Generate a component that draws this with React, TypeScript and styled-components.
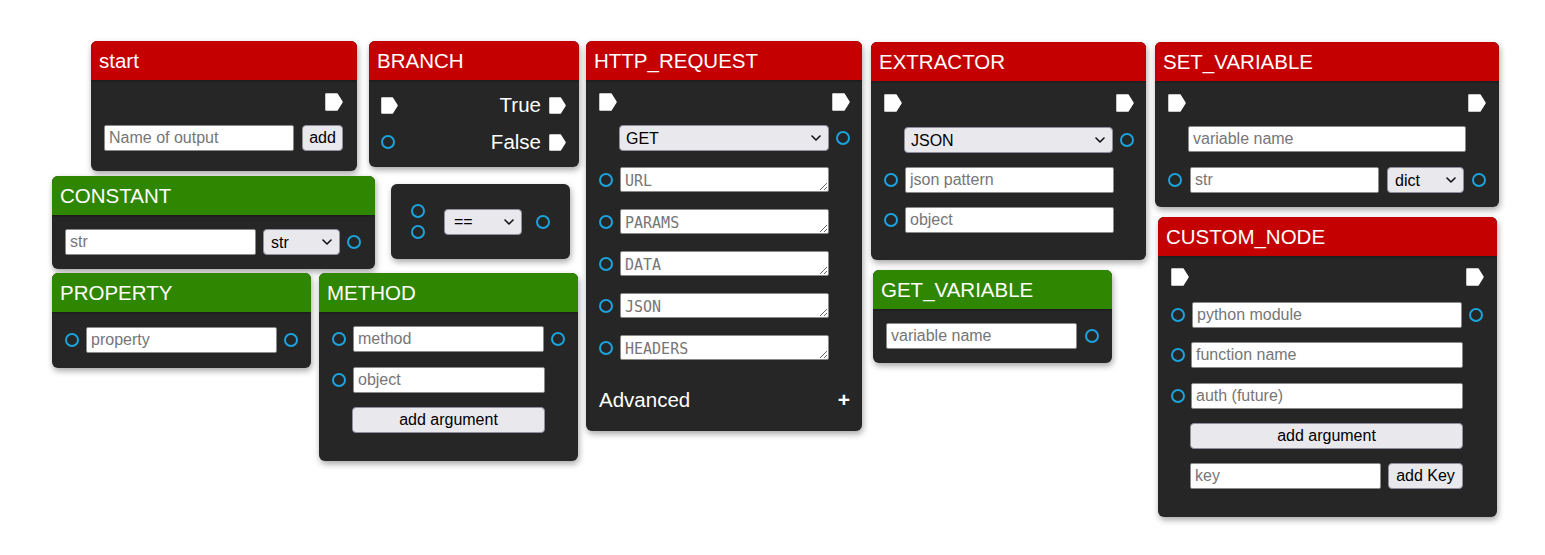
import React from "react";
import styled, { createGlobalStyle } from "styled-components";

const Global = createGlobalStyle`
  html, body { margin: 0; padding: 0; background: #ffffff; }
  body { font-family: "Liberation Sans", Arial, sans-serif; }
`;

const RED = "#c40000";
const GREEN = "#2f8600";

const Canvas = styled.div`
  position: relative;
  width: 1545px;
  height: 555px;
  overflow: hidden;
  background: #ffffff;
`;

const NodeBox = styled.div<{ $x: number; $y: number; $w: number }>`
  position: absolute;
  left: ${(p) => p.$x}px;
  top: ${(p) => p.$y}px;
  width: ${(p) => p.$w}px;
  background: #262626;
  border-radius: 6px;
  box-shadow: 1px 3px 6px rgba(0, 0, 0, 0.35);
  overflow: hidden;
  display: flex;
  flex-direction: column;
`;

const Header = styled.div<{ $tone: string }>`
  position: relative;
  z-index: 1;
  height: 39px;
  background: ${(p) => p.$tone};
  color: #ffffff;
  font-size: 20.5px;
  display: flex;
  align-items: center;
  padding-left: 8px;
  box-shadow: 0 1px 2px rgba(0, 0, 0, 0.35);
`;

const Body = styled.div<{ $p: string }>`
  display: flex;
  flex-direction: column;
  padding: ${(p) => p.$p};
`;

const Row = styled.div<{ $mt?: number; $gap?: number; $h?: number; $justify?: string }>`
  display: flex;
  align-items: center;
  margin-top: ${(p) => p.$mt ?? 0}px;
  gap: ${(p) => p.$gap ?? 7}px;
  height: ${(p) => p.$h ?? 26}px;
  justify-content: ${(p) => p.$justify ?? "flex-start"};
`;

const Group = styled.div`
  display: flex;
  align-items: center;
  gap: 8px;
`;

const CompareBody = styled.div`
  display: flex;
  align-items: center;
  height: 75px;
  padding-left: 20px;
  gap: 14px;
`;

const PortStack = styled.div`
  display: flex;
  flex-direction: column;
  gap: 7px;
  margin-right: 5px;
`;

const Spacer = styled.span<{ $w: number }>`
  flex: none;
  width: ${(p) => p.$w}px;
`;

const Port = styled.span`
  flex: none;
  display: block;
  box-sizing: border-box;
  width: 14px;
  height: 14px;
  border-radius: 50%;
  border: 2.5px solid #1ba3dc;
`;

const ExecSvg = styled.svg`
  flex: none;
  display: block;
`;

const Exec = ({ s = 18 }: { s?: number }) => (
  <ExecSvg width={s} height={s} viewBox="0 0 18 18">
    <path
      d="M1 1 H12 L17 9 L12 17 H1 Z"
      fill="#ffffff"
      stroke="#ffffff"
      strokeWidth="1.5"
      strokeLinejoin="round"
    />
  </ExecSvg>
);

const TextInput = styled.input<{ $w: number }>`
  flex: none;
  box-sizing: border-box;
  width: ${(p) => p.$w}px;
  height: 26px;
  margin: 0;
  border: 1px solid #8a8a8a;
  border-radius: 2px;
  background: #ffffff;
  padding: 0 4px;
  font: 16px "Liberation Sans", Arial, sans-serif;
  color: #000000;
  outline: none;
  &::placeholder {
    color: #767676;
  }
`;

const TextArea = styled.textarea<{ $w: number }>`
  flex: none;
  box-sizing: border-box;
  width: ${(p) => p.$w}px;
  height: 25px;
  margin: 0;
  border: 1px solid #8a8a8a;
  border-radius: 2px;
  background: #ffffff;
  padding: 5px 4px 0 4px;
  font: 15px/17px "DejaVu Sans Mono", "Liberation Mono", monospace;
  color: #000000;
  overflow: hidden;
  resize: both;
  outline: none;
  &::placeholder {
    color: #767676;
  }
`;

const SelectWrap = styled.div<{ $w: number }>`
  position: relative;
  flex: none;
  width: ${(p) => p.$w}px;
  height: 26px;
`;

const NativeSelect = styled.select<{ $pl?: number }>`
  appearance: none;
  -webkit-appearance: none;
  box-sizing: border-box;
  width: 100%;
  height: 100%;
  margin: 0;
  background: #e9e9ed;
  border: 1px solid #8f8f9d;
  border-radius: 4px;
  font: 16px "Liberation Sans", Arial, sans-serif;
  color: #000000;
  padding: 0 20px 0 ${(p) => p.$pl ?? 6}px;
  outline: none;
`;

const Chevron = styled.svg`
  position: absolute;
  right: 8px;
  top: 50%;
  margin-top: -3px;
  width: 10px;
  height: 6px;
  pointer-events: none;
`;

const Select = ({ w, value, options, pl }: { w: number; value: string; options: string[]; pl?: number }) => (
  <SelectWrap $w={w}>
    <NativeSelect $pl={pl} defaultValue={value}>
      {options.map((o) => (
        <option key={o} value={o}>
          {o}
        </option>
      ))}
    </NativeSelect>
    <Chevron viewBox="0 0 10 6">
      <path d="M1 1 L5 5 L9 1" fill="none" stroke="#111" strokeWidth="1.6" strokeLinecap="round" strokeLinejoin="round" />
    </Chevron>
  </SelectWrap>
);

const Btn = styled.button<{ $w: number }>`
  flex: none;
  box-sizing: border-box;
  width: ${(p) => p.$w}px;
  height: 26px;
  margin: 0;
  padding: 0;
  background: #e9e9ed;
  border: 1px solid #8f8f9d;
  border-radius: 4px;
  font: 16px "Liberation Sans", Arial, sans-serif;
  color: #000000;
`;

const Label = styled.span`
  color: #ffffff;
  font-size: 20.5px;
  line-height: 24px;
`;

const Plus = styled.span`
  color: #ffffff;
  font-size: 21px;
  font-weight: bold;
  line-height: 24px;
`;

const typeOptions = ["str", "int", "float", "bool", "dict", "list"];

export default function App() {
  return (
    <>
      <Global />
      <Canvas>
        {/* start */}
        <NodeBox $x={91} $y={41} $w={266}>
          <Header $tone={RED}>start</Header>
          <Body $p="13px 14px 20px 13px">
            <Row $h={18} $justify="flex-end">
              <Exec />
            </Row>
            <Row $mt={14} $gap={8}>
              <TextInput $w={190} placeholder="Name of output" />
              <Btn $w={41}>add</Btn>
            </Row>
          </Body>
        </NodeBox>

        {/* BRANCH */}
        <NodeBox $x={369} $y={41} $w={210}>
          <Header $tone={RED}>BRANCH</Header>
          <Body $p="13px 13px 13px 12px">
            <Row $h={24} $justify="space-between">
              <Exec s={17} />
              <Group>
                <Label>True</Label>
                <Exec s={17} />
              </Group>
            </Row>
            <Row $mt={13} $h={24} $justify="space-between">
              <Port />
              <Group>
                <Label>False</Label>
                <Exec s={17} />
              </Group>
            </Row>
          </Body>
        </NodeBox>

        {/* CONSTANT */}
        <NodeBox $x={52} $y={176} $w={323}>
          <Header $tone={GREEN}>CONSTANT</Header>
          <Body $p="14px 14px 14px 13px">
            <Row>
              <TextInput $w={191} placeholder="str" />
              <Select w={77} value="str" options={typeOptions} pl={7} />
              <Port />
            </Row>
          </Body>
        </NodeBox>

        {/* compare */}
        <NodeBox $x={391} $y={184} $w={179}>
          <CompareBody>
            <PortStack>
              <Port />
              <Port />
            </PortStack>
            <Select w={78} value="==" options={["==", "!=", "<", ">", "<=", ">="]} pl={9} />
            <Port />
          </CompareBody>
        </NodeBox>

        {/* PROPERTY */}
        <NodeBox $x={52} $y={273} $w={259}>
          <Header $tone={GREEN}>PROPERTY</Header>
          <Body $p="15px 13px 15px 13px">
            <Row>
              <Port />
              <TextInput $w={191} placeholder="property" />
              <Port />
            </Row>
          </Body>
        </NodeBox>

        {/* METHOD */}
        <NodeBox $x={319} $y={273} $w={259}>
          <Header $tone={GREEN}>METHOD</Header>
          <Body $p="14px 13px 28px 13px">
            <Row>
              <Port />
              <TextInput $w={191} placeholder="method" />
              <Port />
            </Row>
            <Row $mt={15}>
              <Port />
              <TextInput $w={192} placeholder="object" />
            </Row>
            <Row $mt={14}>
              <Spacer $w={13} />
              <Btn $w={193}>add argument</Btn>
            </Row>
          </Body>
        </NodeBox>

        {/* HTTP_REQUEST */}
        <NodeBox $x={586} $y={41} $w={276}>
          <Header $tone={RED}>HTTP_REQUEST</Header>
          <Body $p="13px 12px 19px 13px">
            <Row $h={18} $justify="space-between">
              <Exec />
              <Exec />
            </Row>
            <Row $mt={14}>
              <Spacer $w={13} />
              <Select w={210} value="GET" options={["GET", "POST", "PUT", "DELETE", "PATCH"]} />
              <Port />
            </Row>
            <Row $mt={16} $h={25}>
              <Port />
              <TextArea $w={209} rows={1} placeholder="URL" />
            </Row>
            <Row $mt={17} $h={25}>
              <Port />
              <TextArea $w={209} rows={1} placeholder="PARAMS" />
            </Row>
            <Row $mt={17} $h={25}>
              <Port />
              <TextArea $w={209} rows={1} placeholder="DATA" />
            </Row>
            <Row $mt={17} $h={25}>
              <Port />
              <TextArea $w={209} rows={1} placeholder="JSON" />
            </Row>
            <Row $mt={17} $h={25}>
              <Port />
              <TextArea $w={209} rows={1} placeholder="HEADERS" />
            </Row>
            <Row $mt={28} $h={24} $justify="space-between">
              <Label>Advanced</Label>
              <Plus>+</Plus>
            </Row>
          </Body>
        </NodeBox>

        {/* EXTRACTOR */}
        <NodeBox $x={871} $y={42} $w={275}>
          <Header $tone={RED}>EXTRACTOR</Header>
          <Body $p="13px 12px 27px 13px">
            <Row $h={18} $justify="space-between">
              <Exec />
              <Exec />
            </Row>
            <Row $mt={15}>
              <Spacer $w={13} />
              <Select w={209} value="JSON" options={["JSON", "REGEX", "XPATH"]} />
              <Port />
            </Row>
            <Row $mt={14}>
              <Port />
              <TextInput $w={209} placeholder="json pattern" />
            </Row>
            <Row $mt={14}>
              <Port />
              <TextInput $w={209} placeholder="object" />
            </Row>
          </Body>
        </NodeBox>

        {/* GET_VARIABLE */}
        <NodeBox $x={873} $y={270} $w={239}>
          <Header $tone={GREEN}>GET_VARIABLE</Header>
          <Body $p="14px 13px 14px 13px">
            <Row $gap={8}>
              <TextInput $w={191} placeholder="variable name" />
              <Port />
            </Row>
          </Body>
        </NodeBox>

        {/* SET_VARIABLE */}
        <NodeBox $x={1155} $y={42} $w={344}>
          <Header $tone={RED}>SET_VARIABLE</Header>
          <Body $p="13px 13px 14px 13px">
            <Row $h={18} $justify="space-between">
              <Exec />
              <Exec />
            </Row>
            <Row $mt={14}>
              <Spacer $w={13} />
              <TextInput $w={278} placeholder="variable name" />
            </Row>
            <Row $mt={15} $gap={8}>
              <Port />
              <TextInput $w={189} placeholder="str" />
              <Select w={77} value="dict" options={typeOptions} pl={7} />
              <Port />
            </Row>
          </Body>
        </NodeBox>

        {/* CUSTOM_NODE */}
        <NodeBox $x={1158} $y={217} $w={339}>
          <Header $tone={RED}>CUSTOM_NODE</Header>
          <Body $p="12px 13px 28px 13px">
            <Row $h={18} $justify="space-between">
              <Exec />
              <Exec />
            </Row>
            <Row $mt={16}>
              <Port />
              <TextInput $w={270} placeholder="python module" />
              <Port />
            </Row>
            <Row $mt={14} $gap={6}>
              <Port />
              <TextInput $w={272} placeholder="function name" />
            </Row>
            <Row $mt={15} $gap={6}>
              <Port />
              <TextInput $w={272} placeholder="auth (future)" />
            </Row>
            <Row $mt={14}>
              <Spacer $w={12} />
              <Btn $w={273}>add argument</Btn>
            </Row>
            <Row $mt={14}>
              <Spacer $w={12} />
              <TextInput $w={191} placeholder="key" />
              <Btn $w={75}>add Key</Btn>
            </Row>
          </Body>
        </NodeBox>
      </Canvas>
    </>
  );
}
